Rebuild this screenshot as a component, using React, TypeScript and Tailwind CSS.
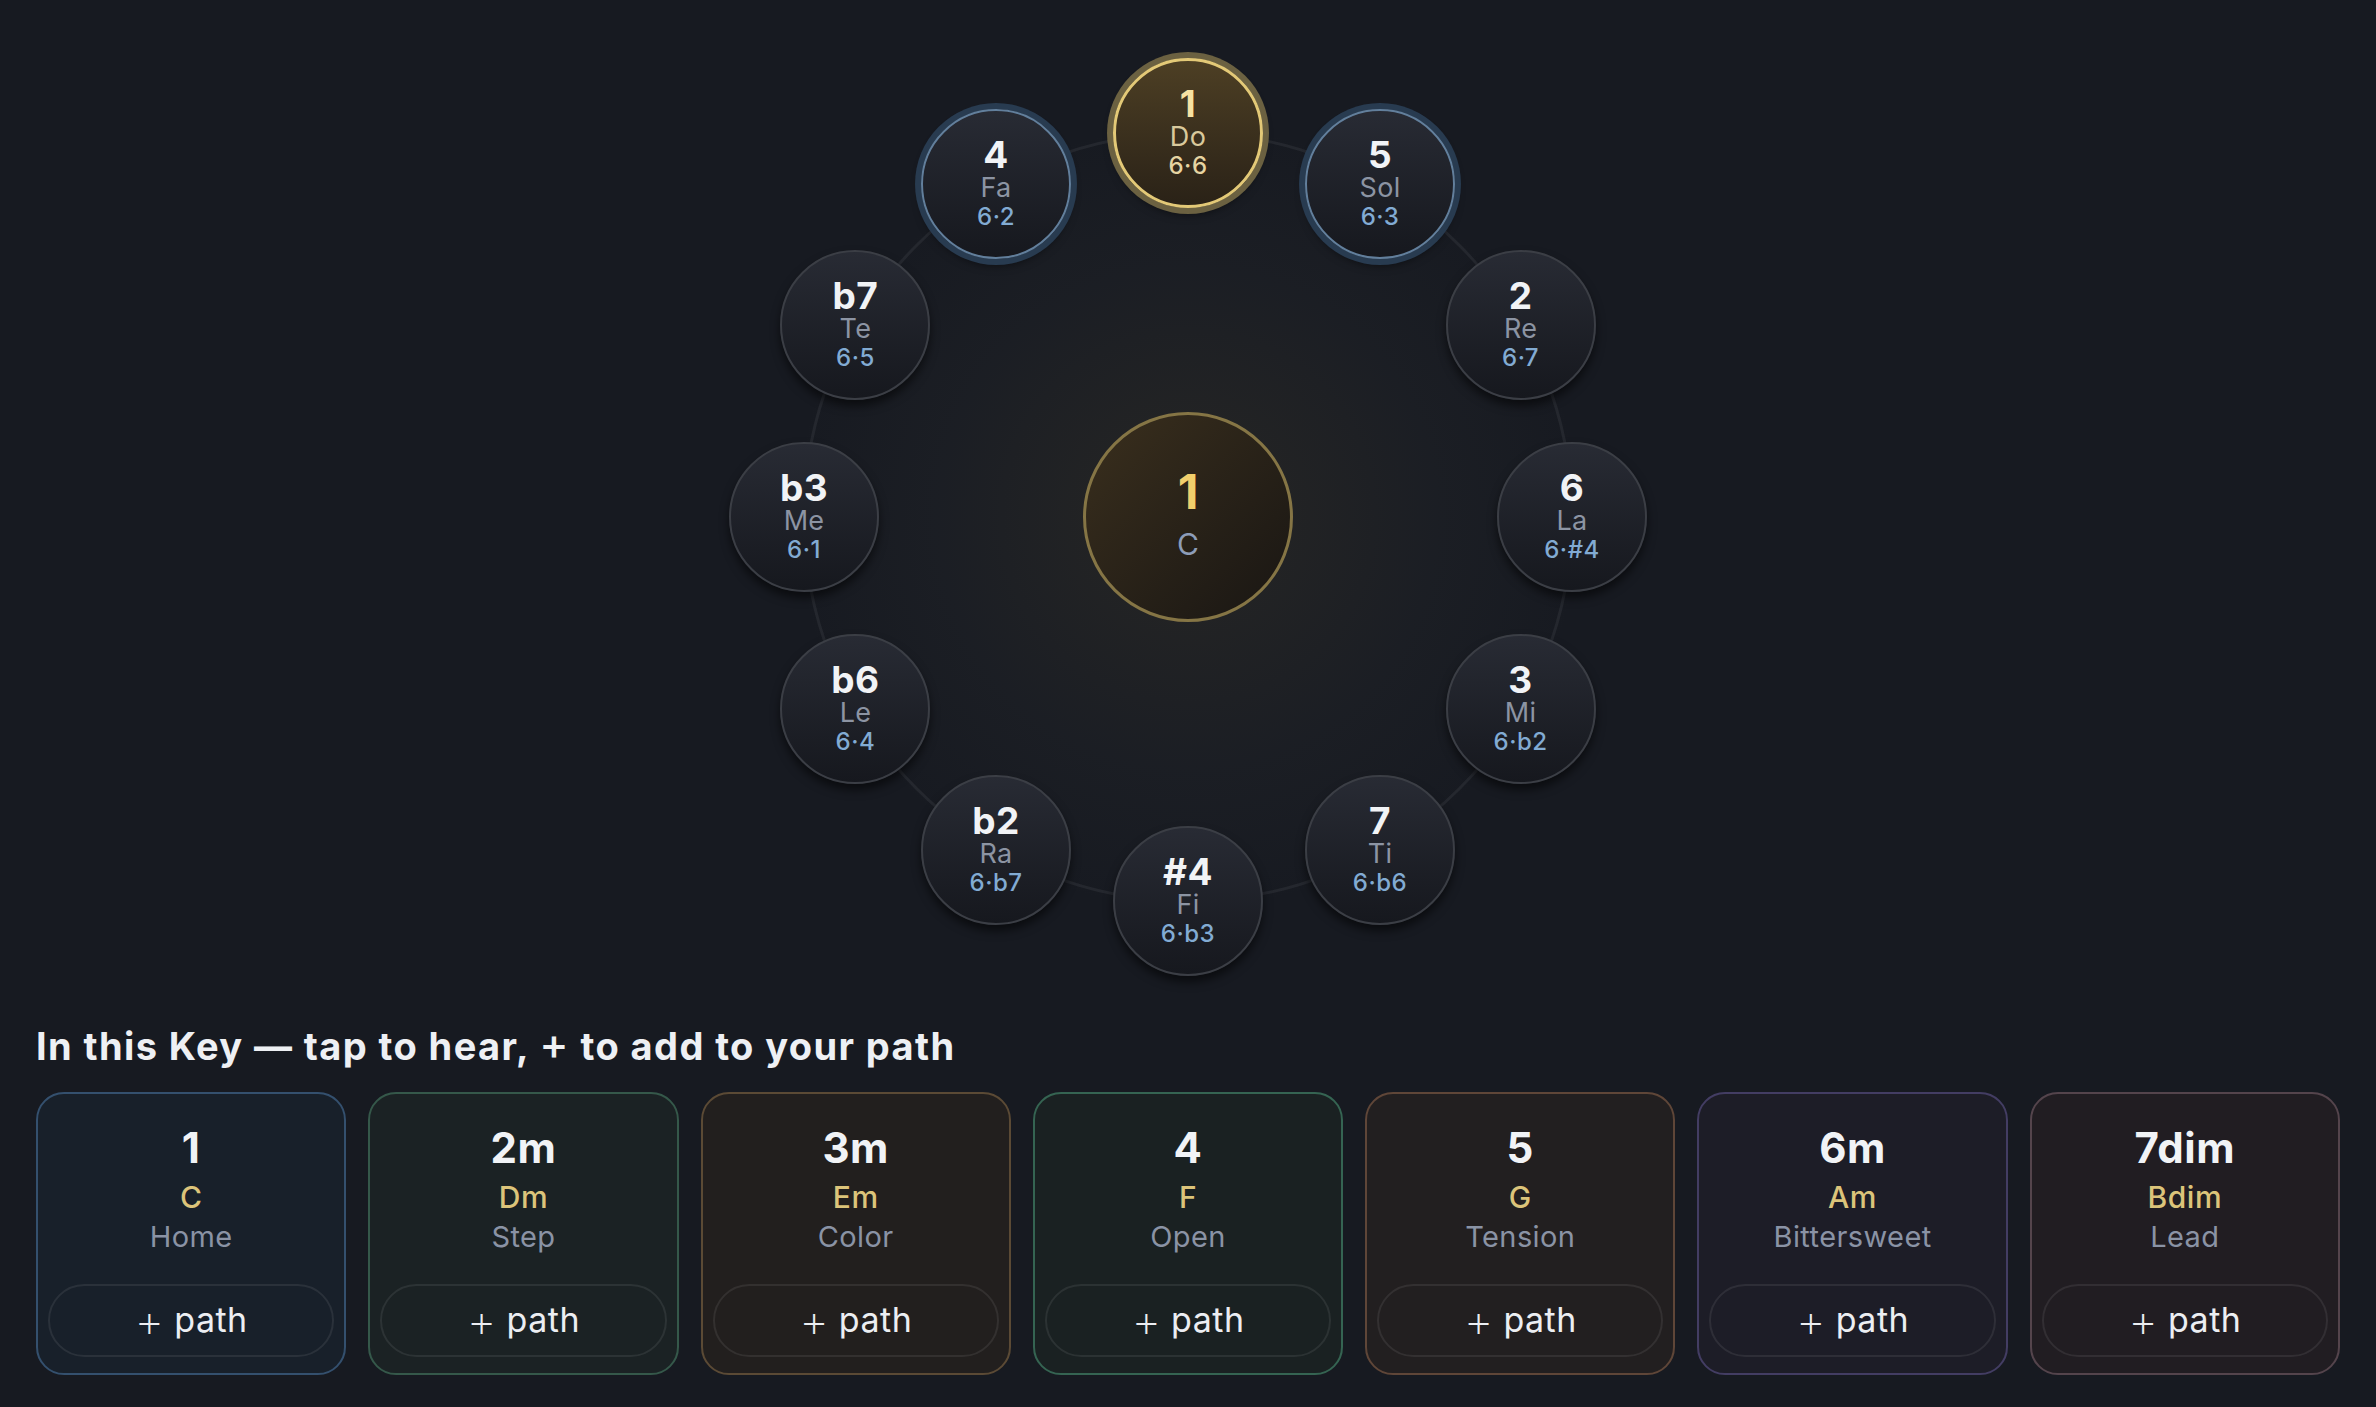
import React from 'react';

type Degree = { num: string; solfege: string; code: string; tone?: 'gold' | 'blue' };

// circle of fifths, clockwise from the top
const degrees: Degree[] = [
  { num: '1', solfege: 'Do', code: '6·6', tone: 'gold' },
  { num: '5', solfege: 'Sol', code: '6·3', tone: 'blue' },
  { num: '2', solfege: 'Re', code: '6·7' },
  { num: '6', solfege: 'La', code: '6·#4' },
  { num: '3', solfege: 'Mi', code: '6·b2' },
  { num: '7', solfege: 'Ti', code: '6·b6' },
  { num: '#4', solfege: 'Fi', code: '6·b3' },
  { num: 'b2', solfege: 'Ra', code: '6·b7' },
  { num: 'b6', solfege: 'Le', code: '6·4' },
  { num: 'b3', solfege: 'Me', code: '6·1' },
  { num: 'b7', solfege: 'Te', code: '6·5' },
  { num: '4', solfege: 'Fa', code: '6·2', tone: 'blue' },
];

const chords = [
  { num: '1', name: 'C', mood: 'Home', card: 'border-[#34506e] bg-[#18202a]' },
  { num: '2m', name: 'Dm', mood: 'Step', card: 'border-[#35584a] bg-[#1b2224]' },
  { num: '3m', name: 'Em', mood: 'Color', card: 'border-[#5b4a35] bg-[#221f1e]' },
  { num: '4', name: 'F', mood: 'Open', card: 'border-[#356452] bg-[#1a2122]' },
  { num: '5', name: 'G', mood: 'Tension', card: 'border-[#5f4638] bg-[#221f20]' },
  { num: '6m', name: 'Am', mood: 'Bittersweet', card: 'border-[#433d63] bg-[#1d1d27]' },
  { num: '7dim', name: 'Bdim', mood: 'Lead', card: 'border-[#54444c] bg-[#211d22]' },
];

const WHEEL = 918;
const RADIUS = 384;
const NODE = 150;

function DegreeNode({ d, index }: { d: Degree; index: number }) {
  const angle = (index * Math.PI) / 6;
  const left = WHEEL / 2 + RADIUS * Math.sin(angle) - NODE / 2;
  const top = WHEEL / 2 - RADIUS * Math.cos(angle) - NODE / 2;

  const shell =
    d.tone === 'gold'
      ? 'border-[3px] border-[#e3c977] bg-linear-to-b from-[#4d3f24] to-[#2a2217] ring-[6px] ring-[#6b6141]'
      : d.tone === 'blue'
        ? 'border-2 border-[#627f9c] bg-linear-to-b from-[#282b34] to-[#16181e] ring-[6px] ring-[#283b50]'
        : 'border-2 border-[#3b3e45] bg-linear-to-b from-[#282b34] to-[#16181e]';

  return (
    <button
      className={`absolute flex h-[150px] w-[150px] flex-col items-center justify-center rounded-full pb-[3px] shadow-[0_6px_10px_rgba(0,0,0,0.55)] ${shell}`}
      style={{ left, top }}
    >
      <span className={`text-[37px] font-bold leading-none tracking-[0.5px] ${d.tone === 'gold' ? 'text-[#f6e2a2]' : 'text-[#f1f3f6]'}`}>
        {d.num}
      </span>
      <span className={`mt-[1px] text-[27px] leading-none tracking-[0.3px] ${d.tone === 'gold' ? 'text-[#d9c99c]' : 'text-[#8c94a3]'}`}>
        {d.solfege}
      </span>
      <span className={`mt-[4px] text-[24px] font-medium leading-none tracking-[0.5px] ${d.tone === 'gold' ? 'text-[#e6d4a2]' : 'text-[#82abd3]'}`}>
        {d.code}
      </span>
    </button>
  );
}

function Wheel() {
  return (
    <div className="relative mx-auto h-[918px] w-[918px]">
      <div className="absolute left-1/2 top-1/2 h-[780px] w-[780px] -translate-x-1/2 -translate-y-1/2 rounded-full bg-[radial-gradient(circle,rgba(74,66,44,0.3)_0%,rgba(44,46,48,0.2)_45%,rgba(23,26,33,0)_72%)]" />
      <svg className="absolute inset-0" width={WHEEL} height={WHEEL}>
        <circle cx={WHEEL / 2} cy={WHEEL / 2} r={RADIUS} fill="none" stroke="rgba(255,255,255,0.06)" strokeWidth={3} />
      </svg>

      <div className="absolute left-1/2 top-1/2 flex h-[210px] w-[210px] -translate-x-1/2 -translate-y-1/2 flex-col items-center justify-center rounded-full border-[3px] border-[#857545] bg-linear-to-br from-[#3a2f1d] to-[#191613] pb-[8px]">
        <span className="text-[48px] font-bold leading-none text-[#f1cf6c]">1</span>
        <span className="mt-[13px] text-[30px] leading-none text-[#8d9db8]">C</span>
      </div>

      {degrees.map((d, i) => (
        <DegreeNode key={d.num} d={d} index={i} />
      ))}
    </div>
  );
}

export default function App() {
  return (
    <div className="min-h-screen bg-[#171a21] pb-[34px] pt-[58px] font-['Inter',sans-serif]">
      <Wheel />

      <div className="px-[36px]">
        <h2 className="mt-[46px] text-[38px] font-bold leading-[1.2] tracking-[1.4px] text-[#eef0f4]">
          In this Key — tap to hear, <span className="text-[44px] font-medium leading-none">+</span> to add to your path
        </h2>

        <div className="mt-[22px] grid grid-cols-7 gap-[22px]">
          {chords.map(c => (
            <div
              key={c.num}
              className={`flex h-[283px] flex-col items-center rounded-[28px] border-2 px-[10px] pb-[16px] pt-[33px] ${c.card}`}
            >
              <span className="text-[42px] font-bold leading-none tracking-[0.6px] text-[#f1f3f6]">{c.num}</span>
              <span className="mt-[13px] text-[30px] font-medium leading-none tracking-[0.5px] text-[#dcc47a]">{c.name}</span>
              <span className="mt-[10px] text-[29px] leading-none tracking-[0.4px] text-[#8a93a5]">{c.mood}</span>
              <button className="mt-auto flex h-[73px] w-full items-center justify-center rounded-full border-2 border-[rgba(255,255,255,0.08)] text-[#eceef2]">
                <span className="text-[46px] font-extralight leading-none">+</span>
                <span className="ml-[10px] text-[34px] leading-none tracking-[0.5px]">path</span>
              </button>
            </div>
          ))}
        </div>
      </div>
    </div>
  );
}
